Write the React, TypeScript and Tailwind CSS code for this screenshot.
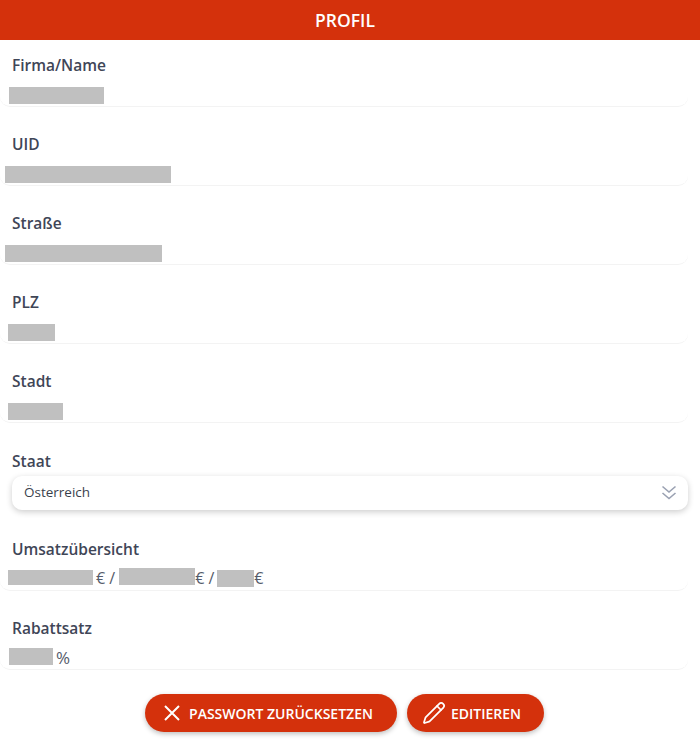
import { Pencil } from "lucide-react";

const FIELDS = [
  { label: "Firma/Name", left: "ml-[9px]", width: "w-[95px]" },
  { label: "UID", left: "ml-[5px]", width: "w-[166px]" },
  { label: "Straße", left: "ml-[5px]", width: "w-[157px]" },
  { label: "PLZ", left: "ml-[8px]", width: "w-[47px]" },
  { label: "Stadt", left: "ml-[8px]", width: "w-[55px]" },
];

function Redacted({ className }: { className: string }) {
  return <span className={`block h-[17px] shrink-0 bg-[#c0c0c0] ${className}`} />;
}

function Label({ children }: { children: string }) {
  return (
    <div className="ml-3 h-[22px] text-[15.5px] leading-[22px] font-semibold text-[#3f4657]">
      {children}
    </div>
  );
}

function Value({ children }: { children: React.ReactNode }) {
  return (
    <div className="mt-[11px] mr-3 flex h-[20px] items-start rounded-b-[10px] border-b border-[#f3f3f3] text-[16px] leading-[17px] text-[#555b6a]">
      {children}
    </div>
  );
}

export default function App() {
  return (
    <div className="flex h-[745px] w-[700px] flex-col overflow-hidden bg-white font-['Open_Sans',sans-serif]">
      <header className="flex h-[40px] shrink-0 items-center justify-center bg-[#d4310c] pr-[10px] text-[17.5px] font-semibold text-white">
        PROFIL
      </header>

      <main className="flex flex-col pt-[14px]">
        {FIELDS.map((f) => (
          <section key={f.label} className="h-[79px]">
            <Label>{f.label}</Label>
            <Value>
              <Redacted className={`${f.left} ${f.width}`} />
            </Value>
          </section>
        ))}

        <section className="h-[89px] pt-[1px]">
          <Label>Staat</Label>
          <div className="mx-3 mt-[4px] flex h-[34px] items-center justify-between rounded-[10px] bg-white pr-[11px] pb-[2px] pl-3 text-[13.5px] text-[#3a3f4c] shadow-[0_2px_6px_rgba(0,0,0,0.2)]">
            <span>Österreich</span>
            <svg width="16" height="16" viewBox="0 0 16 16" fill="none" stroke="#9aa1b2" strokeWidth="1.6" className="mt-[1px]">
              <polyline points="1.5,1.5 8,7 14.5,1.5" />
              <polyline points="1.5,8 8,13.5 14.5,8" />
            </svg>
          </div>
        </section>

        <section className="h-[79px]">
          <Label>Umsatzübersicht</Label>
          <Value>
            <Redacted className="ml-[8px] -mt-[1px] h-[15px]! w-[85px]" />
            <span className="ml-[3px] -mt-[1px]">€ /</span>
            <Redacted className="ml-[4px] -mt-[3px] w-[76px]" />
            <span className="-mt-[1px]">€ /</span>
            <Redacted className="ml-[3px] -mt-[1px] w-[37px]" />
            <span className="-mt-[1px]">€</span>
          </Value>
        </section>

        <section className="h-[79px]">
          <Label>Rabattsatz</Label>
          <Value>
            <Redacted className="ml-[9px] -mt-[2px] w-[44px]" />
            <span className="ml-[3px] -mt-[1px] text-[17px]">%</span>
          </Value>
        </section>
      </main>

      <footer className="mt-[-2px] flex justify-center gap-[10px] pr-[11px]">
        <button className="flex h-[38px] w-[252px] items-center justify-center gap-[8px] rounded-full bg-[#d4310c] pr-[6px] text-[14px] font-semibold text-white shadow-[0_2px_5px_rgba(0,0,0,0.25)]">
          <svg width="18" height="18" viewBox="0 0 18 18" fill="none" stroke="white" strokeWidth="2">
            <path d="M2 2 L16 16 M16 2 L2 16" />
          </svg>
          PASSWORT ZURÜCKSETZEN
        </button>
        <button className="flex h-[38px] w-[137px] items-center justify-center gap-[5px] rounded-full bg-[#d4310c] pr-[8px] text-[14px] font-semibold text-white shadow-[0_2px_5px_rgba(0,0,0,0.25)]">
          <Pencil size={24} strokeWidth={1.75} />
          EDITIEREN
        </button>
      </footer>
    </div>
  );
}
